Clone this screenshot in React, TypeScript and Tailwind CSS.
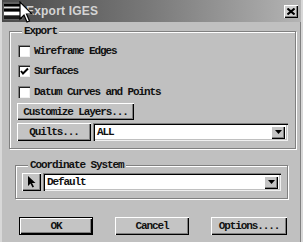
import React from "react";

const mono = { fontFamily: '"Liberation Mono", "DejaVu Sans Mono", monospace' };
const txt = "text-[11px] leading-[12px] font-bold tracking-[-1.1px] text-[#111]";

function Check({ checked }: { checked?: boolean }) {
  return (
    <div className="w-[12px] h-[12px] bg-white shadow-[inset_1px_1px_0_#808080,inset_2px_2px_0_#202020,inset_-1px_-1px_0_#f0f0f0] flex items-center justify-center shrink-0">
      {checked && (
        <svg width="9" height="9" viewBox="0 0 9 9">
          <path d="M1 4 L3 6.5 L8 1.5" stroke="#000" strokeWidth="2" fill="none" />
        </svg>
      )}
    </div>
  );
}

function Btn({ children, className = "", def }: { children: React.ReactNode; className?: string; def?: boolean }) {
  return (
    <div
      className={
        "flex items-center justify-center bg-[#c4c4c4] " +
        txt +
        " " +
        (def
          ? "border border-black shadow-[inset_1px_1px_0_#fff,inset_-1px_-1px_0_#000,inset_-2px_-2px_0_#808080]"
          : "shadow-[inset_1px_1px_0_#fff,inset_-1px_-1px_0_#000,inset_-2px_-2px_0_#808080]") +
        " " +
        className
      }
      style={mono}
    >
      {children}
    </div>
  );
}

function Combo({ text, className = "" }: { text: string; className?: string }) {
  return (
    <div
      className={
        "bg-white flex items-center shadow-[inset_1px_1px_0_#808080,inset_2px_2px_0_#000,inset_-1px_-1px_0_#f0f0f0,inset_-2px_-2px_0_#c0c0c0] " +
        className
      }
    >
      <span className={"flex-1 pl-[4px] " + txt} style={mono}>
        {text}
      </span>
      <div className="w-[14px] h-[13px] mr-[3px] bg-[#c4c4c4] flex items-center justify-center shadow-[inset_1px_1px_0_#fff,inset_-1px_-1px_0_#000,inset_-2px_-2px_0_#808080]">
        <svg width="7" height="4" viewBox="0 0 7 4">
          <path d="M0 0 H7 L3.5 4 Z" fill="#000" />
        </svg>
      </div>
    </div>
  );
}

function Group({ label, className = "", children }: { label: string; className?: string; children: React.ReactNode }) {
  return (
    <div className={"relative border border-[#808080] shadow-[inset_1px_1px_0_#fff,1px_1px_0_#fff] " + className}>
      <span className={"absolute -top-[7px] left-[12px] bg-[#c0c0c0] px-[2px] " + txt} style={mono}>
        {label}
      </span>
      {children}
    </div>
  );
}

export default function App() {
  return (
    <div className="w-[303px] h-[242px] bg-[#c0c0c0] relative overflow-hidden border-l-2 border-r-2 border-[#d8d8d8] shadow-[inset_-1px_0_0_#808080]">
      {/* Title bar */}
      <div className="h-[22px] flex items-center bg-gradient-to-r from-[#4a4a4a] via-[#7a7a7a] to-[#b4b4b4]">
        <div className="w-[20px] h-[18px] ml-[1px] shrink-0">
          <svg width="20" height="18" viewBox="0 0 20 18">
            <rect x="0" y="0" width="20" height="18" fill="#606060" />
            <rect x="1" y="2" width="18" height="2" fill="#000" />
            <rect x="1" y="5" width="18" height="1" fill="#e0e0e0" />
            <rect x="1" y="7" width="18" height="2" fill="#000" />
            <rect x="1" y="10" width="18" height="3" fill="#fff" />
            <rect x="1" y="14" width="18" height="3" fill="#1a1a1a" />
          </svg>
        </div>
        <span
          className="ml-[3px] text-[12px] font-bold text-[#d4d4d4] tracking-[0.2px]"
          style={{ fontFamily: '"Liberation Sans", Arial, sans-serif' }}
        >
          Export IGES
        </span>
        <div className="ml-auto mr-[3px] w-[14px] h-[13px] bg-[#d0d0d0] flex items-center justify-center shadow-[inset_1px_1px_0_#fff,inset_-1px_-1px_0_#000,inset_-2px_-2px_0_#808080]">
          <svg width="8" height="7" viewBox="0 0 8 7">
            <path d="M0.5 0.5 L7.5 6.5 M7.5 0.5 L0.5 6.5" stroke="#000" strokeWidth="2" />
          </svg>
        </div>
      </div>

      {/* Export group */}
      <Group label="Export" className="ml-[7px] mr-[5px] mt-[9px] h-[118px]">
        <div className="flex flex-col pl-[8px] pt-[13px]">
          <div className="flex items-center h-[12px] gap-[4px]">
            <Check />
            <span className={txt} style={mono}>
              Wireframe Edges
            </span>
          </div>
          <div className="flex items-center h-[12px] gap-[4px] mt-[8px]">
            <Check checked />
            <span className={txt} style={mono}>
              Surfaces
            </span>
          </div>
          <div className="flex items-center h-[12px] gap-[4px] mt-[9px]">
            <Check />
            <span className={txt} style={mono}>
              Datum Curves and Points
            </span>
          </div>
          <Btn className="w-[117px] h-[17px] mt-[5px] -ml-[1px]">Customize Layers...</Btn>
          <div className="flex items-center mt-[3px] -ml-[1px] gap-[2px]">
            <Btn className="w-[74px] h-[18px]">Quilts...</Btn>
            <Combo text="ALL" className="w-[195px] h-[18px]" />
          </div>
        </div>
      </Group>

      {/* Coordinate system group */}
      <Group label="Coordinate System" className="ml-[13px] mr-[13px] mt-[16px] h-[34px]">
        <div className="flex items-center pl-[6px] pt-[7px] gap-[2px]">
          <div className="w-[19px] h-[18px] bg-[#c4c4c4] flex items-center justify-center shadow-[inset_1px_1px_0_#fff,inset_-1px_-1px_0_#000,inset_-2px_-2px_0_#808080]">
            <svg width="9" height="12" viewBox="0 0 9 12">
              <path d="M1 0 L1 10 L3.5 7.5 L5.5 11.5 L7 10.8 L5 7 L8.5 7 Z" fill="#000" />
            </svg>
          </div>
          <Combo text="Default" className="w-[238px] h-[18px]" />
        </div>
      </Group>

      {/* Bottom buttons */}
      <div className="flex items-center mt-[18px] pl-[17px] gap-[22px]">
        <Btn def className="w-[74px] h-[18px]">OK</Btn>
        <Btn className="w-[74px] h-[18px]">Cancel</Btn>
        <Btn className="w-[76px] h-[18px]">Options....</Btn>
      </div>

      {/* Mouse cursor overlay */}
      <svg className="absolute left-[17px] top-[1px]" width="14" height="24" viewBox="0 0 14 24">
        <path d="M1 1 L1 18 L5 14 L8 21 L10.5 20 L7.5 13 L13 13 Z" fill="#fff" stroke="#000" strokeWidth="1.2" />
      </svg>
    </div>
  );
}
